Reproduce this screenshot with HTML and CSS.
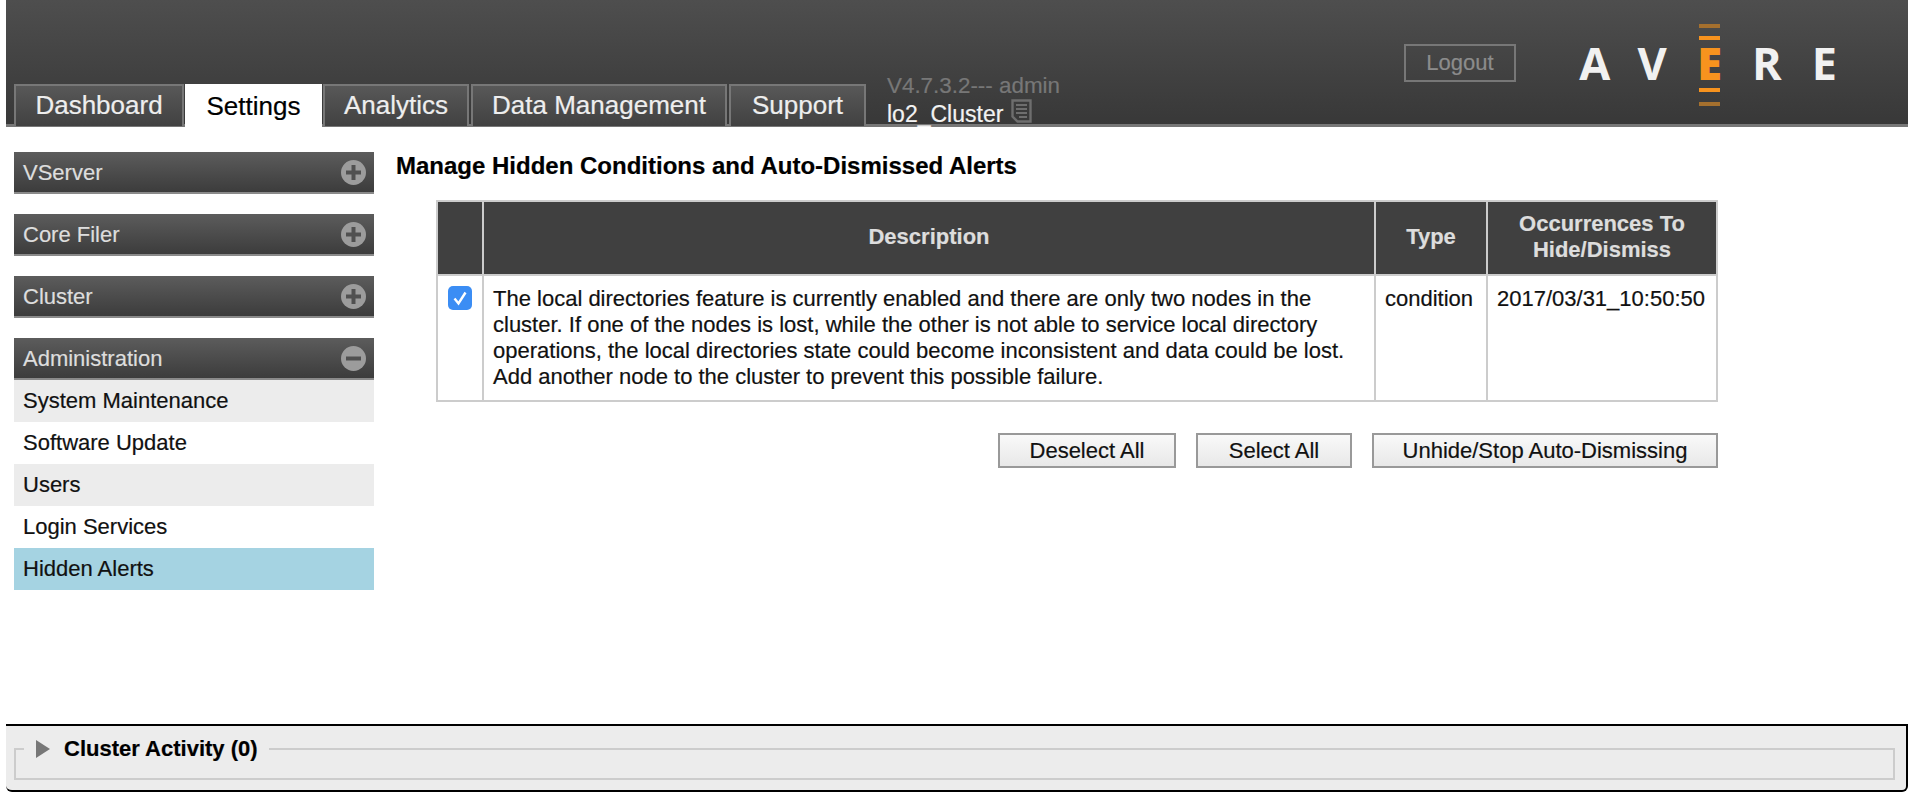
FILE: index.html
```html
<!DOCTYPE html>
<html lang="en">
<head>
<meta charset="utf-8">
<title>Hidden Alerts</title>
<link rel="stylesheet" href="styles.css">
</head>
<body>
<header class="topbar">
  <nav class="tabs">
    <a class="tab tab-dashboard">Dashboard</a>
    <a class="tab tab-settings active">Settings</a>
    <a class="tab tab-analytics">Analytics</a>
    <a class="tab tab-data">Data Management</a>
    <a class="tab tab-support">Support</a>
  </nav>
  <div class="meta">
    <div class="version">V4.7.3.2--- admin</div>
    <div class="cluster">lo2_Cluster
      <svg class="note" viewBox="0 0 21 24" width="21" height="24" aria-hidden="true">
        <path d="M1.5 1.5h18v21H6.5l-5-5z" fill="none" stroke="#6e6e6e" stroke-width="2.4"/>
        <path d="M5 6h11M5 10h11M5 14h11M8 18h8" stroke="#6e6e6e" stroke-width="2"/>
      </svg>
    </div>
  </div>
  <a class="logout">Logout</a>
  <div class="logo">
    <span class="logo-letter">A</span><span class="logo-letter">V</span>
    <span class="logo-e"><i class="bar dim"></i><i class="bar"></i><b class="logo-mid">E</b><i class="bar"></i><i class="bar dim last"></i></span>
    <span class="logo-letter">R</span><span class="logo-letter">E</span>
  </div>
</header>

<main class="main">
  <aside class="sidebar">
    <section class="group">
      <h3 class="group-head">VServer<span class="toggle"><svg viewBox="0 0 25 25" width="25" height="25"><circle cx="12.5" cy="12.5" r="12.5" fill="#9c9c9c"/><path d="M12.5 5v15M5 12.5h15" stroke="#505050" stroke-width="4"/></svg></span></h3>
    </section>
    <section class="group">
      <h3 class="group-head">Core Filer<span class="toggle"><svg viewBox="0 0 25 25" width="25" height="25"><circle cx="12.5" cy="12.5" r="12.5" fill="#9c9c9c"/><path d="M12.5 5v15M5 12.5h15" stroke="#505050" stroke-width="4"/></svg></span></h3>
    </section>
    <section class="group">
      <h3 class="group-head">Cluster<span class="toggle"><svg viewBox="0 0 25 25" width="25" height="25"><circle cx="12.5" cy="12.5" r="12.5" fill="#9c9c9c"/><path d="M12.5 5v15M5 12.5h15" stroke="#505050" stroke-width="4"/></svg></span></h3>
    </section>
    <section class="group">
      <h3 class="group-head">Administration<span class="toggle"><svg viewBox="0 0 25 25" width="25" height="25"><circle cx="12.5" cy="12.5" r="12.5" fill="#9c9c9c"/><path d="M5 12.5h15" stroke="#505050" stroke-width="4"/></svg></span></h3>
      <ul class="menu">
        <li class="shade">System Maintenance</li>
        <li>Software Update</li>
        <li class="shade">Users</li>
        <li>Login Services</li>
        <li class="current">Hidden Alerts</li>
      </ul>
    </section>
  </aside>

  <section class="content">
    <h2 class="title">Manage Hidden Conditions and Auto-Dismissed Alerts</h2>
    <table class="alerts">
      <thead>
        <tr>
          <th class="col-check"></th>
          <th class="col-desc">Description</th>
          <th class="col-type">Type</th>
          <th class="col-occ">Occurrences To Hide/Dismiss</th>
        </tr>
      </thead>
      <tbody>
        <tr>
          <td class="cell-check">
            <span class="checkbox"><svg viewBox="0 0 24 24" width="24" height="24"><path d="M6.5 12.5l4 5 7-11" fill="none" stroke="#fff" stroke-width="2.4"/></svg></span>
          </td>
          <td>The local directories feature is currently enabled and there are only two nodes in the cluster. If one of the nodes is lost, while the other is not able to service local directory operations, the local directories state could become inconsistent and data could be lost. Add another node to the cluster to prevent this possible failure.</td>
          <td>condition</td>
          <td>2017/03/31_10:50:50</td>
        </tr>
      </tbody>
    </table>
    <div class="actions">
      <button class="btn btn-deselect">Deselect All</button>
      <button class="btn btn-select">Select All</button>
      <button class="btn btn-unhide">Unhide/Stop Auto-Dismissing</button>
    </div>
  </section>
</main>

<footer class="activity">
  <fieldset class="activity-box">
    <legend class="activity-legend"><span class="arrow"></span>Cluster Activity (0)</legend>
  </fieldset>
</footer>
</body>
</html>
```

FILE: styles.css
```css
* { box-sizing: border-box; }

html, body { margin: 0; padding: 0; }

body {
  width: 1908px;
  height: 798px;
  overflow: hidden;
  display: flex;
  flex-direction: column;
  background: #fff;
  color: #111;
  font-family: "Liberation Sans", Arial, sans-serif;
  font-size: 22px;
  -webkit-text-stroke: 0.2px;
}

/* Top bar */
.topbar {
  flex: none;
  height: 127px;
  margin-left: 6px;
  display: flex;
  align-items: flex-start;
  background: linear-gradient(#4e4e4e, #383838);
  border-bottom: 3px solid #777;
}

.tabs {
  display: flex;
  gap: 2px;
  margin: 84px 0 -3px 8px;
  height: 43px;
}

.tab {
  display: block;
  height: 42px;
  padding-top: 5px;
  text-align: center;
  font-size: 26px;
  line-height: 28px;
  color: #eee;
  background: linear-gradient(#585858, #414141);
  border: 2px solid #777;
  border-bottom: 0;
}
.tab-dashboard { width: 170px; }
.tab-analytics { width: 146px; }
.tab-data      { width: 256px; }
.tab-support   { width: 137px; }

.tab.active {
  height: 43px;
  margin: 0 -1px;
  width: 137px;
  color: #000;
  background: #fff;
  border: 0;
  padding-top: 8px;
}

.meta {
  margin: 72px 0 0 21px;
  width: 517px;
}
.version { color: #777; font-size: 22.4px; line-height: 27px; }
.cluster {
  display: flex;
  align-items: flex-start;
  gap: 8px;
  height: 24px;
  font-size: 23px;
  line-height: 31px;
  color: #f2f2f2;
  white-space: nowrap;
}
.note { flex: none; }

.logout {
  width: 112px;
  height: 38px;
  margin-top: 44px;
  text-align: center;
  line-height: 34px;
  font-size: 22px;
  color: #8c8c8c;
  border: 2px solid #777;
}

.logo {
  display: flex;
  align-items: flex-start;
  margin: 24px 0 0 50px;
  font-family: "Open Sans", sans-serif;
  font-weight: 700;
  font-size: 45px;
  color: #f1f1f1;
  -webkit-text-stroke: 0;
}
.logo-letter {
  display: block;
  width: 57.4px;
  height: 32px;
  margin-top: 24px;
  line-height: 29px;
  text-align: center;
}
.logo-e {
  display: flex;
  flex-direction: column;
  align-items: center;
  width: 57.4px;
  color: #f7931e;
}
.logo-mid {
  display: block;
  height: 32px;
  margin-bottom: 8px;
  line-height: 29px;
}
.bar { display: block; flex: none; width: 21px; height: 4px; margin-bottom: 8px; background: #f7931e; }
.bar.dim { background: #a5702e; }
.bar:nth-of-type(3) { margin-bottom: 10px; }
.bar.last { margin-bottom: 0; }

/* Main */
.main {
  flex: 1;
  display: flex;
  min-height: 0;
  padding: 25px 0 0 14px;
}

.sidebar { flex: none; width: 360px; }

.group { margin-bottom: 20px; }

.group-head {
  display: flex;
  justify-content: space-between;
  align-items: center;
  height: 42px;
  margin: 0;
  padding: 1px 8px 0 9px;
  font-size: 22px;
  font-weight: 400;
  color: #ddd;
  background: linear-gradient(#5c5c5c, #3c3c3c);
  border-bottom: 2px solid #8a8a8a;
}
.toggle { display: flex; margin-top: -1px; }

.menu { list-style: none; margin: 0; padding: 0; }
.menu li { height: 42px; padding: 0 9px; line-height: 41px; color: #111; }
.menu .shade { background: #ececec; }
.menu .current { background: #a5d3e2; }

.content { flex: none; width: 1321px; margin-left: 22px; }

.title {
  margin: 0;
  height: 48px;
  font-size: 24px;
  line-height: 28px;
  font-weight: 700;
  color: #000;
}

.alerts {
  width: 1280px;
  margin: 0 0 0 40px;
  border-collapse: collapse;
  table-layout: fixed;
}
.alerts th, .alerts td { border: 2px solid #ccc; }
.alerts th {
  height: 74px;
  padding: 0 8px 3px;
  background: #404040;
  color: #ddd;
  font-size: 22px;
  line-height: 26px;
  font-weight: 700;
  text-align: center;
}
.alerts td {
  height: 126px;
  padding: 10px 9px 0;
  vertical-align: top;
  line-height: 26px;
  font-size: 22px;
}
.col-check { width: 46px; }
.col-desc { width: 892px; }
.col-type { width: 112px; }
.col-occ { width: 230px; }
.alerts .cell-check { padding: 10px 0 0 10px; }

.checkbox {
  display: block;
  width: 24px;
  height: 24px;
  border-radius: 5px;
  background: #3b8df4;
}
.checkbox svg { display: block; }

.actions {
  display: flex;
  justify-content: flex-end;
  gap: 20px;
  width: 1322px;
  margin-top: 31px;
}
.btn {
  height: 35px;
  padding: 0;
  font-family: inherit;
  font-size: 22px;
  color: #111;
  background: linear-gradient(#f9f9f9, #e8e8e8);
  border: 2px solid #999;
  border-radius: 0;
}
.btn-deselect { width: 178px; }
.btn-select { width: 156px; }
.btn-unhide { width: 346px; }

/* Bottom panel */
.activity {
  flex: none;
  height: 68px;
  margin: 0 0 6px 6px;
  padding: 11px 11px 0 8px;
  background: #ececec;
  border-top: 2px solid #000;
  border-bottom: 2px solid #000;
  border-right: 2px solid #000;
  border-bottom-left-radius: 6px;
  border-bottom-right-radius: 6px;
}
.activity-box {
  height: 43px;
  margin: 0;
  padding: 0;
  border: 2px solid #ccc;
  min-width: 0;
}
.activity-legend {
  display: flex;
  align-items: center;
  margin-left: 8px;
  padding: 0 11px 0 12px;
  font-size: 22px;
  font-weight: 700;
  line-height: 24px;
  color: #000;
}
.arrow {
  width: 0;
  height: 0;
  margin-right: 14px;
  border-left: 14px solid #777;
  border-top: 9px solid transparent;
  border-bottom: 9px solid transparent;
}
```
